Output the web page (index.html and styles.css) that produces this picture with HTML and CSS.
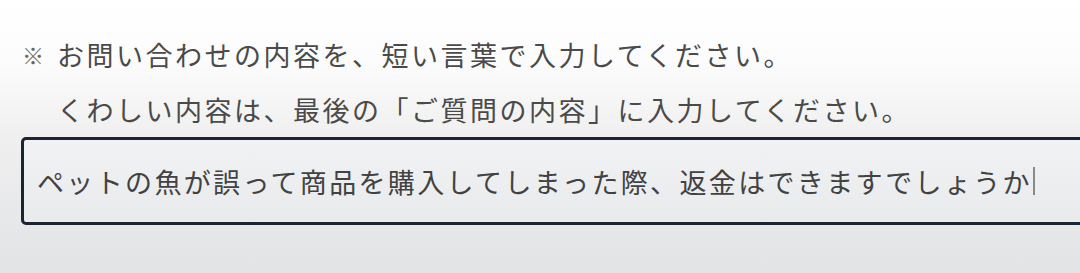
FILE: index.html
```html
<!DOCTYPE html>
<html lang="ja">
<head>
<meta charset="utf-8">
<title>お問い合わせ</title>
<link rel="stylesheet" href="styles.css">
</head>
<body>
<main class="form">
  <div class="notes">
    <p class="note"><span class="mark">※</span><span>お問い合わせの内容を、短い言葉で入力してください。</span></p>
    <p class="note"><span class="mark"></span><span>くわしい内容は、最後の「ご質問の内容」に入力してください。</span></p>
  </div>
  <div class="field" role="textbox">ペットの魚が誤って商品を購入してしまった際、返金はできますでしょうか<span class="caret"></span></div>
</main>
</body>
</html>
```

FILE: styles.css
```css
html, body {
  margin: 0;
  padding: 0;
  width: 1080px;
  height: 273px;
  overflow: hidden;
}
body {
  background: linear-gradient(180deg, #ffffff 0px, #fcfcfc 60px, #efeff0 140px, #e2e3e5 273px);
  font-family: "Noto Sans CJK JP", "Noto Sans", sans-serif;
}
.form {
  padding: 27px 0 0 22px;
}
.notes {
  margin: 0;
}
.note {
  margin: 0;
  display: flex;
  font-size: 27px;
  line-height: 55px;
  height: 55px;
  color: #4a4a4a;
  letter-spacing: 2.5px;
  white-space: nowrap;
}
.mark {
  width: 35px;
  flex: none;
  letter-spacing: 0;
  font-size: 22px;
  color: #666666;
}
.field {
  margin-left: -1px;
  width: 1120px;
  height: 82px;
  box-sizing: content-box;
  border: 3px solid #1b2434;
  border-radius: 5px;
  background: linear-gradient(180deg, #f1f2f4 0%, #e9eaec 100%);
  padding: 0 0 0 13px;
  display: flex;
  align-items: center;
  font-size: 27px;
  letter-spacing: 2.35px;
  color: #424242;
  white-space: nowrap;
}
.caret {
  display: inline-block;
  width: 2px;
  height: 28px;
  background: #8a8a8a;
  margin-left: 1px;
}
```
